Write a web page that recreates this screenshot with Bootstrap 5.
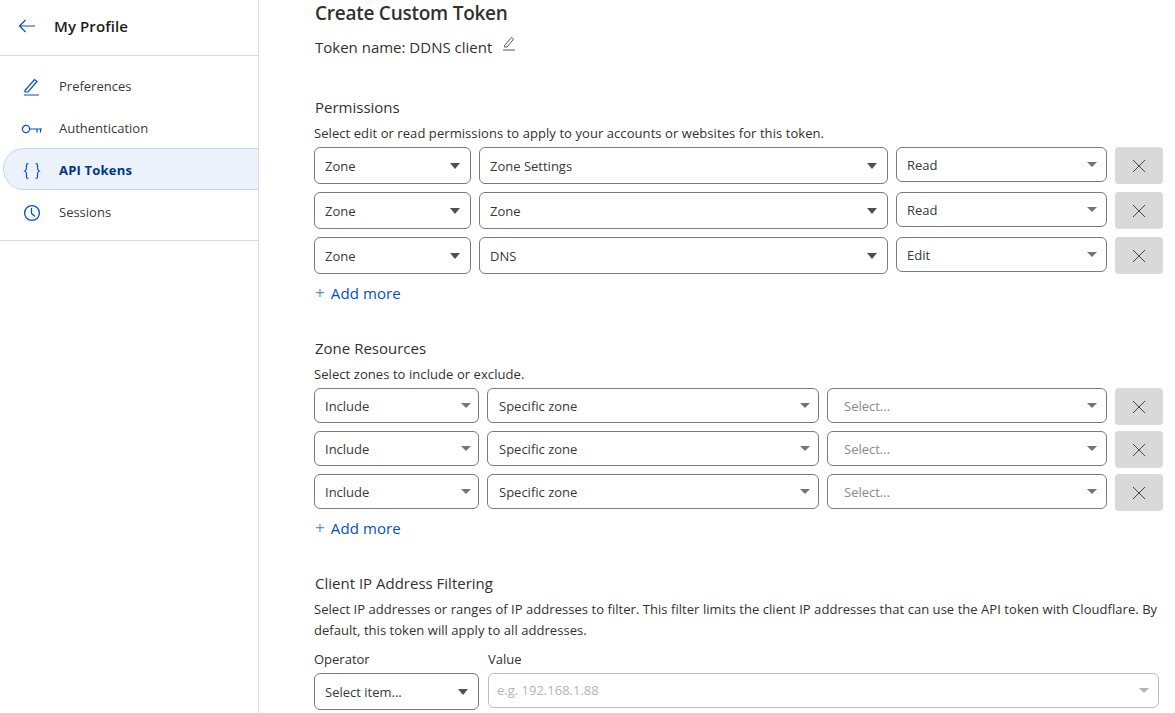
<!DOCTYPE html>
<html lang="en">
<head>
  <meta charset="UTF-8">
  <meta name="viewport" content="width=device-width, initial-scale=1.0">
  <title>Create Custom Token</title>
  <link href="https://cdn.jsdelivr.net/npm/bootstrap@5.3.0/dist/css/bootstrap.min.css" rel="stylesheet">
  <script src="https://cdn.jsdelivr.net/npm/bootstrap@5.3.0/dist/js/bootstrap.bundle.min.js"></script>
  <style>
    html, body { height: 713px; overflow: hidden; }
    body { font-family: "Open Sans", "Noto Sans", sans-serif; color: #313131; font-size: 13px; background: #fff; }
    .side-col { width: 259px; height: 713px; border-right: 1px solid #d9d9d9; flex: none; }
    .side-head { height: 56px; border-bottom: 1px solid #d9d9d9; padding: 0 0 3px 18px; gap: 18px; font-size: 15px; font-weight: 600; color: #1d1d1d; letter-spacing: .1px; }
    .side-list { padding: 8px 0 8px 3px; border-bottom: 1px solid #d9d9d9; }
    .side-item { height: 42px; padding: 3px 0 0 16px; gap: 15px; color: #36393a; text-decoration: none; border: 1px solid transparent; border-right: 0; }
    .side-item svg { width: 24px; flex: none; }
    .side-item.is-active { background: #ebf2fc; border-color: #c5d7f1; border-radius: 21px 0 0 21px; color: #003681; font-weight: 700; letter-spacing: .2px; }
    .main-col { padding: 0 12px 0 55px; }
    .page-title { font-size: 19px; font-weight: 600; line-height: 26px; margin: 0 0 10px; padding-left: 1px; color: #313131; letter-spacing: -.25px; }
    .token-line { font-size: 15px; line-height: 22px; gap: 10px; margin-bottom: 38px; padding-left: 1px; }
    .sect-title { font-size: 15px; line-height: 22px; margin: 0 0 5px; padding-left: 1px; font-weight: 400; color: #313131; }
    .sect-help { line-height: 20px; margin: 0 0 4px; letter-spacing: .07px; }
    .perm-rows { grid-template-columns: 157px 409px 211px 48px; gap: 8px; align-items: start; }
    .zone-rows { grid-template-columns: 165px 332px 280px 48px; column-gap: 8px; row-gap: 6px; align-items: start; margin-bottom: -2px; }
    .form-select.pick { height: 35px; min-height: 0; padding: 2px 28px 0 10px; font-size: 13px; color: #36393a; border: 1px solid #7b7b7b; border-radius: 6px; box-shadow: none;
      background-image: url("data:image/svg+xml,%3Csvg xmlns='http://www.w3.org/2000/svg' width='10' height='5'%3E%3Cpath d='M0 0h10L5 5z' fill='%23757575'/%3E%3C/svg%3E");
      background-size: 10px 5px; background-position: right 9px center; }
    .form-select.pick.tall { height: 37px;
      background-image: url("data:image/svg+xml,%3Csvg xmlns='http://www.w3.org/2000/svg' width='10' height='6'%3E%3Cpath d='M0 0h10L5 6z' fill='%23505050'/%3E%3C/svg%3E");
      background-size: 10px 6px; background-position: right 10px center; }
    .form-select.pick.hint { color: #8a8a8a; padding-left: 16px; }
    .form-select.pick.off { background-color: #fff; color: #b5b5b5; border-color: #bdbdbd; opacity: 1; padding-left: 8px; padding-top: 1px;
      background-image: url("data:image/svg+xml,%3Csvg xmlns='http://www.w3.org/2000/svg' width='10' height='5'%3E%3Cpath d='M0 0h10L5 5z' fill='%23b5b5b5'/%3E%3C/svg%3E"); }
    .zone-rows .form-select.pick:nth-child(4n+1) { background-position: right 7px center; }
    .zone-rows .form-select.pick:nth-child(4n+2) { padding-left: 11px; background-position: right 8px center; }
    .btn.drop-btn { height: 37px; width: 48px; padding: 0; background: #d9d9d9; border: 0; border-radius: 4px; }
    .btn.add-btn { font-size: 15px; line-height: 22px; color: #0051c3; padding: 0 0 0 1px; border: 0; margin: 8px 0 33px; gap: 6px; text-decoration: none; letter-spacing: .1px; }
    .add-plus { color: #5b8fd6; font-size: 17px; line-height: 21px; }
    .filter-help { line-height: 21px; margin: 0 0 9px; max-width: 850px; letter-spacing: .045px; }
    .field-cap { line-height: 18px; margin: 0 0 5px; }
    .filter-row { grid-template-columns: 165px 671px; gap: 9px; }
  </style>
</head>
<body>
  <div class="d-flex">
    <div class="side-col">
      <div class="side-head d-flex align-items-center">
        <svg width="18" height="14" viewBox="0 0 18 14" fill="none" stroke="#0051c3" stroke-width="1.200"><path d="M17 7H1.500M7.500 1L1.500 7l6 6"/></svg>
        <span>My Profile</span>
      </div>
      <div class="side-list">
        <a class="side-item d-flex align-items-center" href="#">
          <svg height="18" viewBox="0 0 24 18" fill="none" stroke="#0051c3" stroke-width="1.200"><path d="M5 12.500L14.500 1.500l2.500 2L8 14H5zM4 17h15"/></svg>
          <span>Preferences</span>
        </a>
        <a class="side-item d-flex align-items-center" href="#">
          <svg height="10" viewBox="0 0 24 10" fill="none" stroke="#0051c3" stroke-width="1.200"><circle cx="6" cy="5" r="3.600"/><path d="M9.600 5H22M17 5v3.500M20.500 5v3.500" /></svg>
          <span>Authentication</span>
        </a>
        <a class="side-item is-active d-flex align-items-center" href="#">
          <svg height="18" viewBox="0 0 24 18" fill="none" stroke="#0051c3" stroke-width="1.200"><path d="M8.500 1.500C6 1.500 6.500 3 6.500 5.500S6 8.500 4.800 9c1.200.5 1.700 1 1.700 3.500s-.5 4 2 4M15.500 1.500c2.500 0 2 1.500 2 4s.5 3 1.700 3.500c-1.200.5-1.700 1-1.700 3.500s.5 4-2 4"/></svg>
          <span>API Tokens</span>
        </a>
        <a class="side-item d-flex align-items-center" href="#">
          <svg height="18" viewBox="0 0 24 18" fill="none" stroke="#0051c3" stroke-width="1.300"><circle cx="12" cy="9" r="7.400"/><path d="M11.500 4v5.500l3.500 3"/></svg>
          <span>Sessions</span>
        </a>
      </div>
    </div>

    <div class="main-col flex-grow-1">
      <h1 class="page-title">Create Custom Token</h1>
      <div class="token-line d-flex">
        <span>Token name: DDNS client</span>
        <svg width="14" height="16" viewBox="0 0 14 16" fill="none" stroke="#555" stroke-width="1"><path d="M2.500 9.500L9.500 1.500l2 1.700-6.500 7.800H2.500zM1 14h12"/></svg>
      </div>

      <h2 class="sect-title">Permissions</h2>
      <p class="sect-help">Select edit or read permissions to apply to your accounts or websites for this token.</p>
      <div class="perm-rows d-grid">
        <select class="form-select pick tall"><option>Zone</option></select>
        <select class="form-select pick tall"><option>Zone Settings</option></select>
        <select class="form-select pick"><option>Read</option></select>
        <button class="btn drop-btn d-flex align-items-center justify-content-center" type="button" aria-label="Remove"><svg width="14" height="14" viewBox="0 0 14 14" stroke="#444" stroke-width="1"><path d="M1 1l12 12M13 1L1 13"/></svg></button>
        <select class="form-select pick tall"><option>Zone</option></select>
        <select class="form-select pick tall"><option>Zone</option></select>
        <select class="form-select pick"><option>Read</option></select>
        <button class="btn drop-btn d-flex align-items-center justify-content-center" type="button" aria-label="Remove"><svg width="14" height="14" viewBox="0 0 14 14" stroke="#444" stroke-width="1"><path d="M1 1l12 12M13 1L1 13"/></svg></button>
        <select class="form-select pick tall"><option>Zone</option></select>
        <select class="form-select pick tall"><option>DNS</option></select>
        <select class="form-select pick"><option>Edit</option></select>
        <button class="btn drop-btn d-flex align-items-center justify-content-center" type="button" aria-label="Remove"><svg width="14" height="14" viewBox="0 0 14 14" stroke="#444" stroke-width="1"><path d="M1 1l12 12M13 1L1 13"/></svg></button>
      </div>
      <button class="btn add-btn d-flex" type="button"><span class="add-plus">+</span> Add more</button>

      <h2 class="sect-title">Zone Resources</h2>
      <p class="sect-help">Select zones to include or exclude.</p>
      <div class="zone-rows d-grid">
        <select class="form-select pick"><option>Include</option></select>
        <select class="form-select pick"><option>Specific zone</option></select>
        <select class="form-select pick hint"><option>Select...</option></select>
        <button class="btn drop-btn d-flex align-items-center justify-content-center" type="button" aria-label="Remove"><svg width="14" height="14" viewBox="0 0 14 14" stroke="#444" stroke-width="1"><path d="M1 1l12 12M13 1L1 13"/></svg></button>
        <select class="form-select pick"><option>Include</option></select>
        <select class="form-select pick"><option>Specific zone</option></select>
        <select class="form-select pick hint"><option>Select...</option></select>
        <button class="btn drop-btn d-flex align-items-center justify-content-center" type="button" aria-label="Remove"><svg width="14" height="14" viewBox="0 0 14 14" stroke="#444" stroke-width="1"><path d="M1 1l12 12M13 1L1 13"/></svg></button>
        <select class="form-select pick"><option>Include</option></select>
        <select class="form-select pick"><option>Specific zone</option></select>
        <select class="form-select pick hint"><option>Select...</option></select>
        <button class="btn drop-btn d-flex align-items-center justify-content-center" type="button" aria-label="Remove"><svg width="14" height="14" viewBox="0 0 14 14" stroke="#444" stroke-width="1"><path d="M1 1l12 12M13 1L1 13"/></svg></button>
      </div>
      <button class="btn add-btn d-flex" type="button"><span class="add-plus">+</span> Add more</button>

      <h2 class="sect-title">Client IP Address Filtering</h2>
      <p class="filter-help">Select IP addresses or ranges of IP addresses to filter. This filter limits the client IP addresses that can use the API token with Cloudflare. By default, this token will apply to all addresses.</p>
      <div class="filter-row d-grid">
        <div>
          <div class="field-cap">Operator</div>
          <select class="form-select pick tall"><option>Select item...</option></select>
        </div>
        <div>
          <div class="field-cap">Value</div>
          <select class="form-select pick off" disabled><option>e.g. 192.168.1.88</option></select>
        </div>
      </div>
    </div>
  </div>
</body>
</html>
